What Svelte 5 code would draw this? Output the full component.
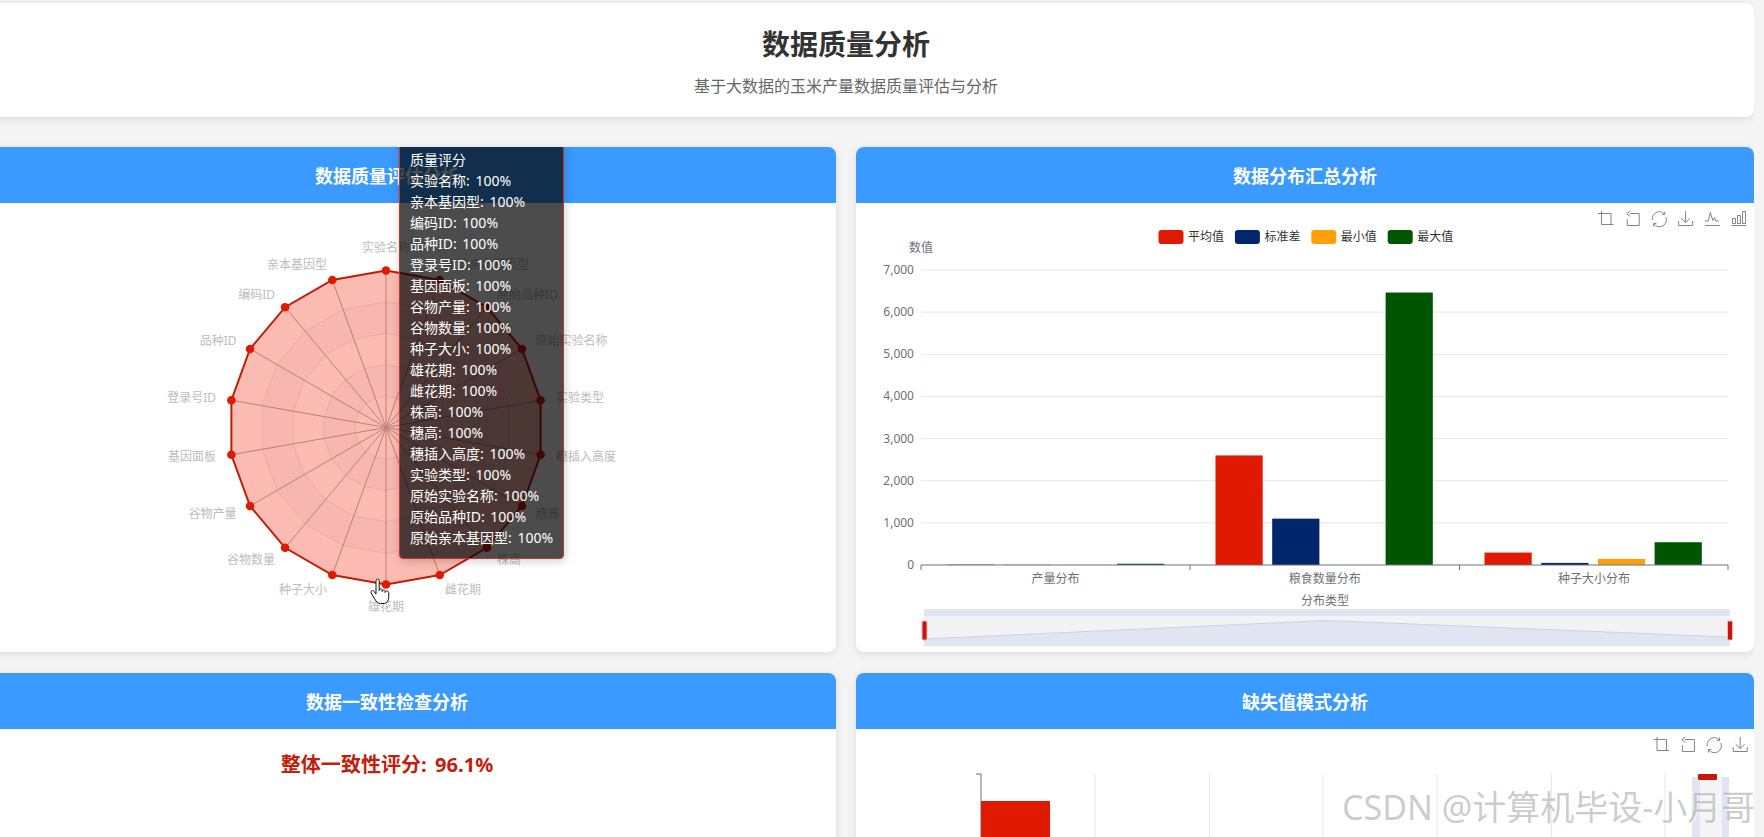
<script>
	const names = ['实验名称', '原始亲本基因型', '原始品种ID', '原始实验名称', '实验类型', '穗插入高度', '穗高', '株高', '雌花期', '雄花期', '种子大小', '谷物数量', '谷物产量', '基因面板', '登录号ID', '品种ID', '编码ID', '亲本基因型'];
	const tipNames = ['实验名称', '亲本基因型', '编码ID', '品种ID', '登录号ID', '基因面板', '谷物产量', '谷物数量', '种子大小', '雄花期', '雌花期', '株高', '穗高', '穗插入高度', '实验类型', '原始实验名称', '原始品种ID', '原始亲本基因型'];

	/* radar, page coordinates: the svg viewBox starts at the card's own corner */
	const cx = 386, cy = 427.5, R = 157;

	function pt(i, r) {
		const a = (i * 20 * Math.PI) / 180;
		return [cx + Math.sin(a) * r, cy - Math.cos(a) * r];
	}
	function ring(r) {
		return names.map((_, i) => pt(i, r).map((v) => v.toFixed(1)).join(',')).join(' ');
	}
	const rings = [5, 4, 3, 2, 1].map((k) => ({ r: (R * k) / 5, fill: k % 2 ? '#ffffff' : '#f8f8fb' }));

	const labels = names.map((name, i) => {
		const deg = i * 20;
		const [x, y] = pt(i, 172.5);
		let anchor = 'start';
		if (deg === 0 || deg === 180) anchor = 'middle';
		else if (deg > 180) anchor = 'end';
		const dy = deg === 0 ? -7 : deg === 180 ? 7 : 0;
		return { name, x, y: y + dy, anchor };
	});

	/* bars */
	const y0 = 565, unit = 295 / 7000, barW = 47.2, step = 56.7;
	const series = ['#e01a00', '#00266b', '#ff9f0a', '#005500'];
	const legend = ['平均值', '标准差', '最小值', '最大值'];
	const cats = [
		{ name: '产量分布', x: 947, vals: [10, 4, 2, 30] },
		{ name: '粮食数量分布', x: 1215.5, vals: [2600, 1100, 0, 6465] },
		{ name: '种子大小分布', x: 1484.5, vals: [295, 50, 145, 540] }
	];
	const ticks = [0, 1000, 2000, 3000, 4000, 5000, 6000, 7000];

	const tools = [
		'M3.5 0V13.5H15.5M0 2.5H13V14',
		'M5 2.5H14.5V14.5H2.5V8M5.5 0L2 2.8L5.5 5.5',
		'M1 9A7 7 0 0 1 13 3M14.500 6A7 7 0 0 1 2.500 13M13.300 0.5V3.4H10.500M2.200 15.500V12.500H5',
		'M7.5 0V11.5M3 7.2L7.5 11.5L12 7.2M0.5 10V14.5H14.5V10',
		'M0 14.5H15M0 10H3.5L5.5 1.5L8 9.5L9.5 6.5L11 10H14',
		'M0 14.5H15M1 7.5H4V12.5H1ZM6 4.5H9V12.5H6ZM11 0.5H14V12.5H11Z'
	];
	const splitX = [1095, 1209.5, 1323, 1437, 1551.5, 1665];
</script>

<div class="page">
	<header class="top">
		<h1>数据质量分析</h1>
		<p>基于大数据的玉米产量数据质量评估与分析</p>
	</header>

	<div class="grid">
		<section class="card">
			<h2>数据质量评估分析</h2>
			<svg class="chart" viewBox="-62 203 898 450">
				{#each rings as c}
					<polygon points={ring(c.r)} fill={c.fill} stroke="#e4e4ea" />
				{/each}
				{#each names as _, i}
					<line x1={cx} y1={cy} x2={pt(i, R)[0]} y2={pt(i, R)[1]} stroke="#a3a3a8" />
				{/each}
				<polygon points={ring(R)} fill="#f52a10" fill-opacity="0.32" stroke="#c01c08" stroke-width="2" />
				{#each names as _, i}
					<circle cx={pt(i, R)[0]} cy={pt(i, R)[1]} r="4.300" fill="#e01a00" />
				{/each}
				{#each labels as l}
					<text x={l.x} y={l.y} dy="4" text-anchor={l.anchor} class="radar-label">{l.name}</text>
				{/each}
				<path class="hand" d="M376 581c0-2.500 3.200-2.500 3.200 0v9.500c0-2 3-2.500 3 0v1c0-2 3-2 3 0v1c0-2 3.300-2 3.500 0v5c0 3-2 5.500-4.200 6h-4c-3 0-4.300-2-5.800-4.500l-3.500-6c-1-2 1.500-3.500 3-1.500l1.800 2.500z" />
			</svg>
			<div class="tooltip">
				<div>质量评分</div>
				{#each tipNames as n}
					<div>{n}: 100%</div>
				{/each}
			</div>
		</section>

		<section class="card">
			<h2>数据分布汇总分析</h2>
			<svg class="chart" viewBox="856 203 898 450">
				{#each tools as d, i}
					<path class="tool" d={d} transform="translate({1598 + i * 26.7} 211)" />
				{/each}
				{#each legend as name, i}
					<rect x={1158.5 + i * 76.4} y="230" width="25" height="14" rx="3" fill={series[i]} />
					<text x={1188 + i * 76.4} y="241" class="legend">{name}</text>
				{/each}
				<text x="921" y="252" text-anchor="middle" class="axis">数值</text>
				{#each ticks as t}
					{#if t > 0}
						<line x1="921" x2="1728" y1={y0 - t * unit} y2={y0 - t * unit} stroke="#e6e6e6" />
					{/if}
					<text x="914" y={y0 - t * unit + 4} text-anchor="end" class="axis">{t.toLocaleString('en-US')}</text>
				{/each}
				{#each cats as c, k}
					{#each c.vals as v, i}
						<rect x={c.x + i * step} y={y0 - v * unit} width={barW} height={v * unit} fill={series[i]} />
					{/each}
					<text x={1055.5 + k * 269.2} y="583" text-anchor="middle" class="axis">{c.name}</text>
				{/each}
				<line x1="921" x2="1728" y1={y0} y2={y0} stroke="#6e7079" />
				{#each [921, 1190, 1459.500, 1728] as x}
					<line x1={x} x2={x} y1={y0} y2={y0 + 5} stroke="#6e7079" />
				{/each}
				<text x="1325" y="605" text-anchor="middle" class="axis">分布类型</text>

				<rect x="924" y="609" width="806" height="7" fill="#dfe5f2" />
				<rect x="924" y="616" width="806" height="30" fill="#f3f3f3" />
				<polygon points="924,639 1327,620.500 1730,637 1730,646 924,646" fill="#e0e5f2" />
				<polyline points="924,639 1327,620.500 1730,637" fill="none" stroke="#c8d2e8" />
				<rect x="922" y="621" width="5" height="19" rx="1" fill="#c9150f" stroke="#efb8b4" />
				<rect x="1727.500" y="621" width="5" height="19" rx="1" fill="#c9150f" stroke="#efb8b4" />
			</svg>
		</section>

		<section class="card">
			<h2>数据一致性检查分析</h2>
			<p class="score">整体一致性评分: 96.1%</p>
		</section>

		<section class="card">
			<h2>缺失值模式分析</h2>
			<svg class="chart" viewBox="856 729 898 450">
				{#each tools.slice(0, 4) as d, i}
					<path class="tool" d={d} transform="translate({1653.500 + i * 26.400} 737)" />
				{/each}
				{#each splitX as x}
					<line x1={x} x2={x} y1="774" y2="900" stroke="#e6e6e6" />
				{/each}
				<line x1="981" x2="981" y1="774" y2="900" stroke="#6e7079" />
				<line x1="976" x2="981" y1="774" y2="774" stroke="#6e7079" />
				<rect x="981" y="801" width="69" height="100" fill="#e01a00" />
				<rect x="1692" y="777" width="37" height="100" fill="#dfe5f2" />
				<rect x="1700" y="777" width="22" height="100" fill="#f5f5f5" />
				<rect x="1698" y="774" width="19" height="6" rx="1" fill="#cc1508" />
			</svg>
		</section>
	</div>

	<div class="watermark">CSDN @计算机毕设-小月哥</div>
</div>

<style>
	:global(body) {
		margin: 0;
		background: #f4f4f4;
		overflow: hidden;
		font-family: "Noto Sans", "Noto Sans CJK SC", sans-serif;
	}
	.page {
		width: 1816px;
		height: 837px;
		margin-left: -62px;
		padding-top: 3px;
		box-sizing: border-box;
		overflow: hidden;
	}
	.top {
		background: #fff;
		border-radius: 8px;
		padding: 23px 20px 20px;
		margin-bottom: 30px;
		text-align: center;
		box-shadow: 0 2px 8px rgba(0, 0, 0, 0.1);
	}
	h1 {
		margin: 0 0 13px;
		font-size: 28px;
		line-height: 36px;
		font-weight: 700;
		color: #333;
	}
	.top p {
		margin: 0;
		font-size: 16px;
		line-height: 22px;
		color: #666;
	}
	.grid {
		display: grid;
		grid-template-columns: 898px 898px;
		grid-auto-rows: 505px;
		gap: 21px 20px;
	}
	.card {
		position: relative;
		background: #fff;
		border-radius: 8px;
		overflow: hidden;
		box-shadow: 0 2px 8px rgba(0, 0, 0, 0.1);
	}
	h2 {
		margin: 0;
		height: 56px;
		display: flex;
		align-items: center;
		justify-content: center;
		background: #3a9aff;
		color: #fff;
		font-size: 18px;
		font-weight: 700;
	}
	.chart {
		display: block;
		width: 898px;
		height: 450px;
	}
	.radar-label {
		font-size: 12px;
		fill: #bcbcbc;
	}
	.legend {
		font-size: 12px;
		fill: #333;
	}
	.axis {
		font-size: 12px;
		fill: #6e7079;
	}
	.tool {
		fill: none;
		stroke: #777;
		stroke-width: 0.9;
	}
	.hand {
		fill: #fff;
		stroke: #111;
		stroke-width: 1;
	}
	.tooltip {
		position: absolute;
		left: 461px;
		top: -9px;
		width: 165px;
		box-sizing: border-box;
		padding: 10px 9px 10px 10px;
		background: rgba(0, 0, 0, 0.7);
		border: 1px solid #c23531;
		border-radius: 4px;
		box-shadow: 1px 2px 10px rgba(0, 0, 0, 0.2);
		color: #fff;
		font-size: 14px;
		line-height: 21px;
		word-spacing: 2px;
		white-space: nowrap;
	}
	.score {
		margin: 0;
		padding-top: 21px;
		text-align: center;
		font-size: 20px;
		line-height: 30px;
		font-weight: 700;
		word-spacing: 3px;
		letter-spacing: 0.05px;
		color: #bf1f0c;
	}
	.watermark {
		position: absolute;
		left: 1342px;
		top: 787px;
		font-size: 34px;
		line-height: 40px;
		white-space: nowrap;
		color: rgba(140, 140, 140, 0.45);
		text-shadow: 1px 1px 1px rgba(255, 255, 255, 0.8);
		pointer-events: none;
	}
</style>
